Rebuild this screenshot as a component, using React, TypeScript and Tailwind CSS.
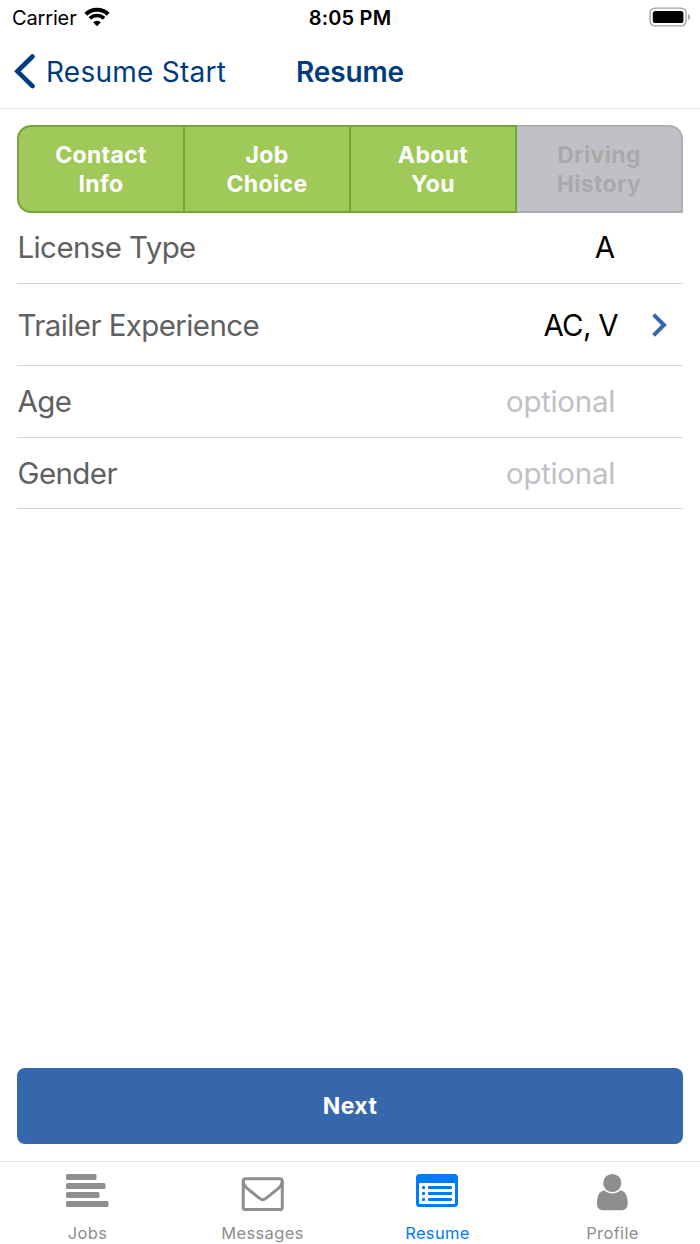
import type { ReactNode } from 'react';
import clsx from 'clsx';

const steps = [
  { lines: ['Contact', 'Info'], done: true },
  { lines: ['Job', 'Choice'], done: true },
  { lines: ['About', 'You'], done: true },
  { lines: ['Driving', 'History'], done: false },
];

function StatusBar() {
  return (
    <div className="grid h-9 grid-cols-[1fr_auto_1fr] items-center pl-3 pr-[9px] text-black">
      <div className="flex items-center gap-[7px]">
        <span className="text-[20px] leading-6 tracking-[-0.15px]">Carrier</span>
        <svg width="26" height="20" viewBox="0 0 26 20" className="-mt-0.5" fill="none" stroke="currentColor">
          <path d="M1.8 7.2a16.2 16.2 0 0 1 22.4 0" strokeWidth="4" />
          <path d="M5.9 11.4a10.2 10.2 0 0 1 14.2 0" strokeWidth="3.7" />
          <path d="M13 19.2l-3.9-3.9a5.5 5.5 0 0 1 7.8 0z" fill="currentColor" stroke="none" />
        </svg>
      </div>
      <span className="pr-[3px] text-center text-[20px] font-semibold leading-6 tracking-[0.2px]">8:05 PM</span>
      <svg width="42" height="20" viewBox="0 0 42 20" className="-mt-0.5 justify-self-end">
        <rect x="1.1" y="1.1" width="36" height="17.8" rx="5" fill="none" stroke="#a0a0a0" strokeWidth="1.3" />
        <rect x="3.8" y="4" width="30.6" height="12" rx="2.6" fill="#000" />
        <path d="M39.2 7v6c1.3-.5 2-1.7 2-3s-.7-2.5-2-3z" fill="#a0a0a0" />
      </svg>
    </div>
  );
}

function NavBar() {
  return (
    <div className="grid h-[73px] grid-cols-[1fr_auto_1fr] items-center border-b border-[#e5e5e5] px-[14px] text-[#003c7d]">
      <div className="flex items-center gap-[10px]">
        <svg width="22" height="36" viewBox="0 0 22 36" fill="none" stroke="currentColor" strokeWidth="4.6" strokeLinecap="round">
          <path d="M18.5 2.5L3.4 17.3l15.1 14.8" />
        </svg>
        <span className="text-[28px] leading-9 tracking-[0.25px]">Resume Start</span>
      </div>
      <span className="text-[28px] font-semibold leading-9 tracking-[-0.1px]">Resume</span>
      <span />
    </div>
  );
}

function Row({ label, className, children }: { label: string; className: string; children: ReactNode }) {
  return (
    <div className={clsx('flex items-center justify-between border-b border-[#d6d6da] text-[29.5px] leading-9', className)}>
      <span className="pl-[0.5px] tracking-[-0.6px] text-[#606060]">{label}</span>
      {children}
    </div>
  );
}

function Tab({ label, active, children }: { label: string; active?: boolean; children: ReactNode }) {
  return (
    <div className={clsx('flex flex-1 flex-col items-center', active ? 'text-[#007aff]' : 'text-[#8e8e8e]')}>
      <svg width="43" height="40" viewBox="0 0 43 40" className="mt-[11px] shrink-0" fill="currentColor">
        {children}
      </svg>
      <span className="mt-[10px] text-[16.5px] leading-[21px] tracking-[0.35px]">{label}</span>
    </div>
  );
}

export default function App() {
  return (
    <div className="flex h-[1244px] w-[700px] flex-col overflow-hidden bg-white font-['Inter',sans-serif]">
      <StatusBar />
      <NavBar />

      <main className="flex flex-1 flex-col px-[17px] pb-[17px] pt-4">
        <div className="flex h-[88px]">
          {steps.map((step) => (
            <div
              key={step.lines[0]}
              className={clsx(
                'flex flex-1 flex-col items-center justify-center border-y-2 pt-0.5 text-[23px] font-bold leading-[29px] tracking-[0.35px]',
                step.done
                  ? 'border-r-2 border-[#79a536] bg-[#9fc959] text-white first:rounded-l-[14px] first:border-l-2'
                  : 'rounded-tr-[14px] border-r-2 border-[#aeaeb0] bg-[#c0c1c7] text-[#a9a9a9]'
              )}
            >
              {step.lines.map((line) => (
                <span key={line}>{line}</span>
              ))}
            </div>
          ))}
        </div>

        <Row label="License Type" className="h-[71px] pb-0.5 pr-[68px]">
          <span className="text-black">A</span>
        </Row>
        <Row label="Trailer Experience" className="h-[82px] pr-4">
          <span className="flex items-center gap-[34px] text-black">
            <span className="tracking-[-0.7px]">AC, V</span>
            <svg width="15" height="24" viewBox="0 0 15 24" fill="none" stroke="#3667ad" strokeWidth="4">
              <path d="M1.6 1.6L12 12 1.6 22.4" />
            </svg>
          </span>
        </Row>
        <Row label="Age" className="h-[72px] pb-px pr-[68px]">
          <span className="tracking-[-0.3px] text-[#c0c0c6]">optional</span>
        </Row>
        <Row label="Gender" className="h-[71px] pb-px pr-[68px]">
          <span className="tracking-[-0.3px] text-[#c0c0c6]">optional</span>
        </Row>

        <button className="mt-auto h-[76px] rounded-lg bg-[#3667ad] text-[23px] font-bold tracking-[0.4px] text-white">
          Next
        </button>
      </main>

      <nav className="flex h-[83px] border-t border-[#e2e2e2]">
        <Tab label="Jobs">
          <rect x="0" y="1" width="30.5" height="6" rx="1.6" />
          <rect x="0" y="10" width="39.5" height="6" rx="1.6" />
          <rect x="0" y="19" width="33.5" height="6" rx="1.6" />
          <rect x="0" y="28" width="42.5" height="6" rx="1.6" />
        </Tab>
        <Tab label="Messages">
          <g fill="none" stroke="currentColor" strokeWidth="3">
            <rect x="2.2" y="5.8" width="39.1" height="30.8" rx="2.4" />
            <path d="M2.2 8c0 3 1.2 5.2 3.6 7.1l11.6 9.3c1.9 1.5 3.1 2.4 4.4 2.4s2.5-.9 4.4-2.4l11.5-9.3c2.4-1.9 3.6-4.1 3.6-7.1" />
          </g>
        </Tab>
        <Tab label="Resume" active>
          <path
            fillRule="evenodd"
            d="M3.5 1h35a3.5 3.5 0 0 1 3.5 3.5v26a3.5 3.5 0 0 1-3.5 3.5h-35A3.5 3.5 0 0 1 0 30.5v-26A3.5 3.5 0 0 1 3.5 1zM4 10a1 1 0 0 0-1 1v19a1 1 0 0 0 1 1h34a1 1 0 0 0 1-1V11a1 1 0 0 0-1-1z"
          />
          {[13, 19, 25].map((y) => (
            <g key={y}>
              <rect x="6" y={y} width="3" height="3" rx="0.8" />
              <rect x="12" y={y} width="24" height="3" rx="0.8" />
            </g>
          ))}
        </Tab>
        <Tab label="Profile">
          <circle cx="21.3" cy="10" r="9.1" />
          <path d="M13.5 17.5C8 17.7 6 23.5 6 30.5c0 4 2.2 6.7 5.6 6.7h19.5c3.4 0 5.6-2.7 5.6-6.7 0-7-2-12.8-7.5-13-2.2 2-4.9 3-7.9 3s-5.6-1-7.8-3z" />
        </Tab>
      </nav>
    </div>
  );
}
